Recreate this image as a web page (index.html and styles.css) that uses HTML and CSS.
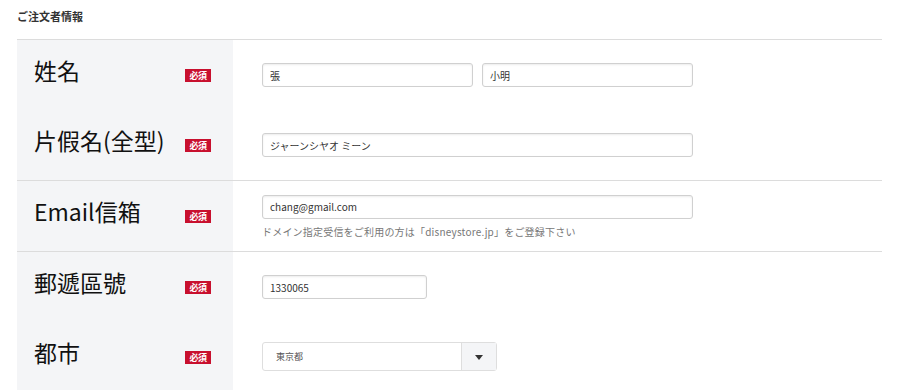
FILE: index.html
```html
<!DOCTYPE html>
<html lang="ja">
<head>
    <meta charset="UTF-8">
    <meta name="viewport" content="width=device-width, initial-scale=1.0">
    <title>ご注文者情報</title>
    <link rel="stylesheet" href="styles.css">
</head>
<body>
    <div class="container">
        <h2 class="section-title">ご注文者情報</h2>

        <div class="form-block">
            <div class="form-row">
                <div class="label-cell">
                    <span class="label-text">姓名</span>
                    <span class="required">必須</span>
                </div>
                <div class="field-cell">
                    <div class="name-pair">
                        <input type="text" class="text-input half" value="張">
                        <input type="text" class="text-input half" value="小明">
                    </div>
                </div>
            </div>
            <div class="form-row">
                <div class="label-cell">
                    <span class="label-text">片假名(全型)</span>
                    <span class="required">必須</span>
                </div>
                <div class="field-cell">
                    <input type="text" class="text-input full" value="ジャーンシヤオ ミーン">
                </div>
            </div>
        </div>

        <div class="form-block">
            <div class="form-row">
                <div class="label-cell">
                    <span class="label-text">Email信箱</span>
                    <span class="required">必須</span>
                </div>
                <div class="field-cell">
                    <input type="email" class="text-input full" value="chang@gmail.com">
                    <p class="hint">ドメイン指定受信をご利用の方は「disneystore.jp」をご登録下さい</p>
                </div>
            </div>
        </div>

        <div class="form-block">
            <div class="form-row">
                <div class="label-cell">
                    <span class="label-text">郵遞區號</span>
                    <span class="required">必須</span>
                </div>
                <div class="field-cell">
                    <input type="text" class="text-input zip" value="1330065">
                </div>
            </div>
            <div class="form-row">
                <div class="label-cell">
                    <span class="label-text">都市</span>
                    <span class="required">必須</span>
                </div>
                <div class="field-cell">
                    <div class="select-box">
                        <span class="select-value">東京都</span>
                        <span class="select-arrow"></span>
                    </div>
                </div>
            </div>
        </div>
    </div>
</body>
</html>
```

FILE: styles.css
```css
:root {
    --label-bg: #f4f5f7;
    --line-color: #dcdcdc;
    --input-border: #d0d0d0;
    --required-color: #c8102e;
    --text-color: #222;
}

* {
    margin: 0;
    padding: 0;
    box-sizing: border-box;
}

body {
    background-color: #fff;
    font-family: "Noto Sans CJK JP", "Noto Sans", sans-serif;
    color: var(--text-color);
}

.container {
    width: 865px;
    margin-left: 17px;
}

.section-title {
    height: 40px;
    padding-top: 8px;
    font-size: 11px;
    font-weight: bold;
    color: #333;
    border-bottom: 1px solid var(--line-color);
}

.form-block {
    border-bottom: 1px solid var(--line-color);
}

.form-row {
    display: flex;
    height: 70px;
}

.label-cell {
    width: 216px;
    padding-left: 17px;
    display: flex;
    align-items: center;
    background-color: var(--label-bg);
}

.label-text {
    width: 151px;
    font-size: 23px;
    line-height: 1;
    color: #111;
    margin-bottom: 9px;
}

.required {
    width: 26px;
    height: 13px;
    background-color: var(--required-color);
    color: #fff;
    font-size: 9px;
    font-weight: bold;
    line-height: 13px;
    text-align: center;
    letter-spacing: -0.5px;
}

.field-cell {
    flex: 1;
    padding-left: 29px;
    display: flex;
    flex-direction: column;
    justify-content: center;
}

.name-pair {
    display: flex;
    gap: 9px;
}

.text-input {
    height: 24px;
    padding: 0 7px;
    border: 1px solid var(--input-border);
    border-radius: 3px;
    box-shadow: inset 0 1px 2px rgba(0, 0, 0, 0.08);
    font-family: "Noto Sans CJK JP", "Noto Sans", sans-serif;
    font-size: 10px;
    color: #333;
    background-color: #fff;
}

.text-input.half {
    width: 211px;
}

.text-input.full {
    width: 431px;
}

.text-input.zip {
    width: 165px;
}

.hint {
    margin-top: 6px;
    font-size: 10px;
    letter-spacing: 0.2px;
    color: #777;
    line-height: 13px;
}

.select-box {
    width: 235px;
    height: 29px;
    display: flex;
    border: 1px solid #dedede;
    border-radius: 3px;
    margin-top: -2px;
}

.select-value {
    flex: 1;
    padding-left: 13px;
    font-size: 9px;
    line-height: 27px;
    color: #555;
}

.select-arrow {
    width: 35px;
    position: relative;
    background-color: var(--label-bg);
    border-left: 1px solid #dedede;
}

.select-arrow::after {
    content: "";
    position: absolute;
    left: 13px;
    top: 12px;
    border-left: 4px solid transparent;
    border-right: 4px solid transparent;
    border-top: 5px solid #333;
}
```
